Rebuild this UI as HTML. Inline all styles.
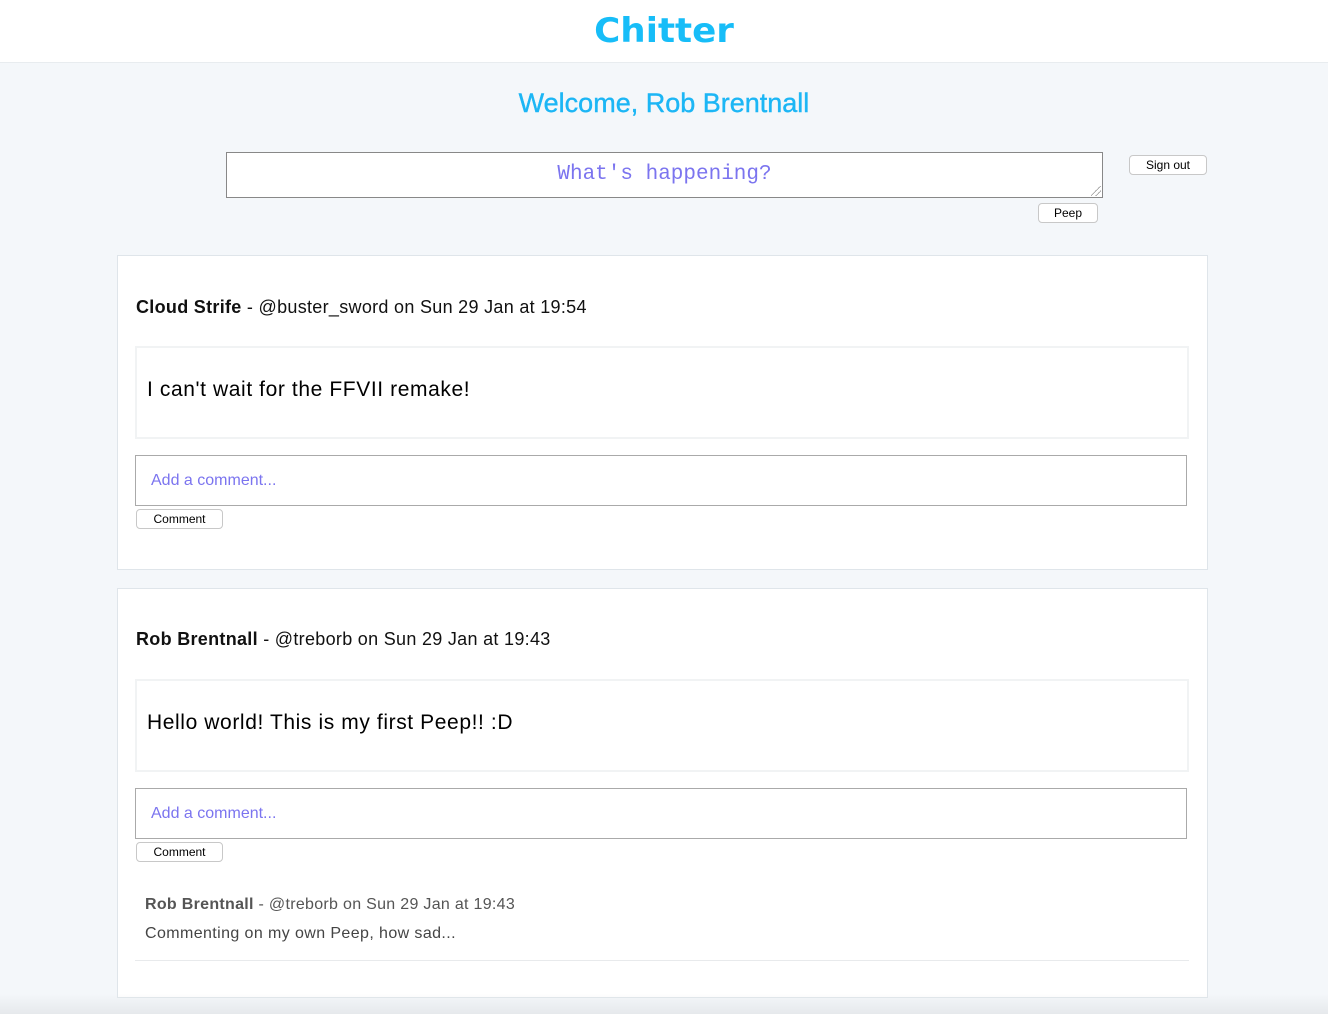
<!DOCTYPE html>
<html><head><meta charset="utf-8"><style>
*{box-sizing:border-box;margin:0;padding:0}
body{width:1328px;height:1014px;overflow:hidden;background:#f4f7fa;font-family:"Liberation Sans",sans-serif;position:relative;color:#000}
.hdr{position:absolute;left:0;top:0;width:1328px;height:63px;background:#fff;border-bottom:1px solid #e8ecef}
.logo{position:absolute;left:0;width:1328px;top:11px;text-align:center;font-size:34px;font-weight:900;color:#17bdf8;font-family:"DejaVu Sans",sans-serif;transform:scaleX(1.05)}
.wel{position:absolute;left:0;width:1328px;top:88px;text-align:center;font-size:27px;color:#1cb6f5;-webkit-text-stroke:0.4px #1cb6f5}
.ta{position:absolute;left:226px;top:152px;width:877px;height:46px;background:#fff;border:1px solid #888;text-align:center;font-family:"Liberation Mono",monospace;font-size:21px;color:#7b74ef;padding-top:10px}
.grip{position:absolute;right:1px;bottom:1px;width:10px;height:10px;background:linear-gradient(135deg,transparent 45%,#999 45%,#999 52%,transparent 52%,transparent 70%,#999 70%,#999 77%,transparent 77%)}
.btn{position:absolute;background:#fff;border:1px solid #c8c8c8;border-radius:4px;font-size:12px;text-align:center;line-height:18px;color:#000}
.card{position:absolute;left:117px;width:1091px;background:#fff;border:1px solid #dfe5ea}
.meta{position:absolute;left:18px;font-size:18px;color:#111;letter-spacing:0.3px;white-space:nowrap}
.body{position:absolute;left:17px;width:1054px;height:93px;border:2px solid #f1f3f4;font-size:21px;padding:30px 10px;letter-spacing:0.6px}
.cm{position:absolute;left:17px;width:1052px;height:51px;border:1px solid #aaa;font-size:16px;color:#7b74ef;padding:16px 15px}
</style></head><body>
<div class="hdr"><div class="logo">Chitter</div></div>
<div class="wel">Welcome, Rob Brentnall</div>
<div class="ta">What's happening?<div class="grip"></div></div>
<div class="btn" style="left:1129px;top:155px;width:78px;height:20px">Sign out</div>
<div class="btn" style="left:1038px;top:203px;width:60px;height:20px">Peep</div>

<div class="card" style="top:255px;height:315px">
  <div class="meta" style="top:41px"><b>Cloud Strife</b> - @buster_sword on Sun 29 Jan at 19:54</div>
  <div class="body" style="top:90px">I can't wait for the FFVII remake!</div>
  <div class="cm" style="top:199px">Add a comment...</div>
  <div class="btn" style="left:18px;top:253px;width:87px;height:20px">Comment</div>
</div>

<div class="card" style="top:588px;height:410px">
  <div class="meta" style="top:40px"><b>Rob Brentnall</b> - @treborb on Sun 29 Jan at 19:43</div>
  <div class="body" style="top:90px">Hello world! This is my first Peep!! :D</div>
  <div class="cm" style="top:199px">Add a comment...</div>
  <div class="btn" style="left:18px;top:253px;width:87px;height:20px">Comment</div>
  <div class="meta" style="top:307px;left:27px;font-size:16px;color:#555"><b>Rob Brentnall</b> - @treborb on Sun 29 Jan at 19:43</div>
  <div class="meta" style="top:336px;left:27px;font-size:16px;color:#444;letter-spacing:0.4px">Commenting on my own Peep, how sad...</div>
  <div style="position:absolute;left:17px;top:371px;width:1054px;height:1px;background:#e8eaec"></div>
</div>
<div style="position:absolute;left:0;top:994px;width:1328px;height:20px;background:linear-gradient(rgba(230,233,236,0),#e6e9ec)"></div>
</body></html>
